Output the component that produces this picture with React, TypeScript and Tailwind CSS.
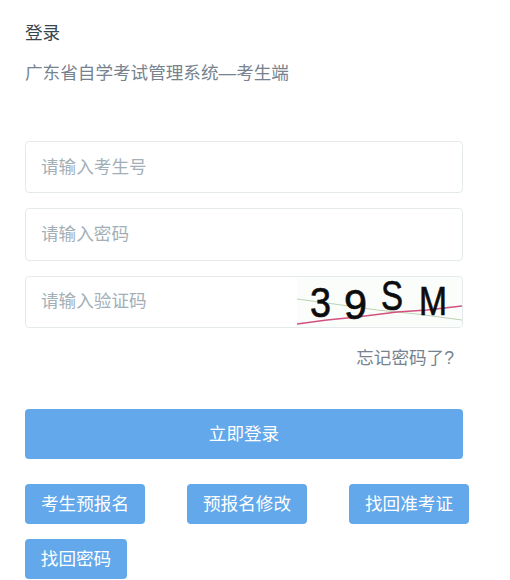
const font = "font-['Liberation_Sans','Noto_Sans_CJK_SC',sans-serif]";

function Field({ placeholder }: { placeholder: string }) {
  return (
    <input
      placeholder={placeholder}
      className="h-[52.4px] w-full rounded-[4px] border border-[#e4eaec] bg-white px-[15px] text-[17.6px] text-[#76838f] outline-none placeholder:text-[#a3afb7]"
    />
  );
}

function Captcha() {
  return (
    <svg width="165" height="50" viewBox="0 0 165 50" className="shrink-0 bg-[#fbfdfb]">
      <path d="M0 22 L30 26 L80 33 L120 37 L165 43" fill="none" stroke="#bcd3b4" strokeWidth="1.2" />
      <path d="M0 47 L30 43 L60 40 L100 35 L130 33 L165 29" fill="none" stroke="#d2517f" strokeWidth="1.6" />
      <g fill="#0c0c0c" stroke="#0c0c0c" strokeWidth="0.7" fontFamily="'Liberation Sans', sans-serif" fontSize="42">
        <text x="13" y="40" textLength="21" lengthAdjust="spacingAndGlyphs">3</text>
        <text x="47" y="42" textLength="23" lengthAdjust="spacingAndGlyphs">9</text>
        <text x="84" y="33" textLength="22" lengthAdjust="spacingAndGlyphs">S</text>
        <text x="122" y="38" fontSize="40" textLength="28" lengthAdjust="spacingAndGlyphs">M</text>
      </g>
    </svg>
  );
}

function LinkButton({ label, wide }: { label: string; wide?: boolean }) {
  return (
    <button
      className={
        wide
          ? "h-[40px] w-[120px] rounded-[4px] bg-[#62a8ea] text-[17.6px] text-white"
          : "h-[40px] w-[102px] rounded-[4px] bg-[#62a8ea] text-[17.6px] text-white"
      }
    >
      {label}
    </button>
  );
}

export default function App() {
  return (
    <div className={`${font} h-[580px] w-[510px] overflow-hidden bg-white pl-[25px]`}>
      {/* Header */}
      <h1 className="pt-[20px] text-[17.6px] leading-[26px] font-normal text-[#37474f]">登录</h1>
      <p className="mt-[14px] text-[17.6px] leading-[26px] text-[#76838f]">广东省自学考试管理系统—考生端</p>

      {/* Form */}
      <div className="mt-[55px] flex w-[438px] flex-col">
        <Field placeholder="请输入考生号" />
        <div className="mt-[15px]">
          <Field placeholder="请输入密码" />
        </div>
        <div className="mt-[15px] flex h-[52.4px] items-center overflow-hidden rounded-[4px] border border-[#e4eaec] bg-white">
          <input
            placeholder="请输入验证码"
            className="h-full min-w-0 flex-1 px-[15px] text-[17.6px] outline-none placeholder:text-[#a3afb7]"
          />
          <Captcha />
        </div>
        <div className="mt-[16.8px] pr-[9px] text-right text-[17.6px] leading-[26px] text-[#76838f]">忘记密码了?</div>
        <button className="mt-[38px] h-[50px] w-full rounded-[4px] bg-[#62a8ea] text-[17.6px] text-white">立即登录</button>
      </div>

      {/* Other actions */}
      <div className="mt-[25px] flex w-[480px] flex-wrap gap-x-[42px] gap-y-[15px]">
        <LinkButton wide label="考生预报名" />
        <LinkButton wide label="预报名修改" />
        <LinkButton wide label="找回准考证" />
        <LinkButton label="找回密码" />
      </div>
    </div>
  );
}
